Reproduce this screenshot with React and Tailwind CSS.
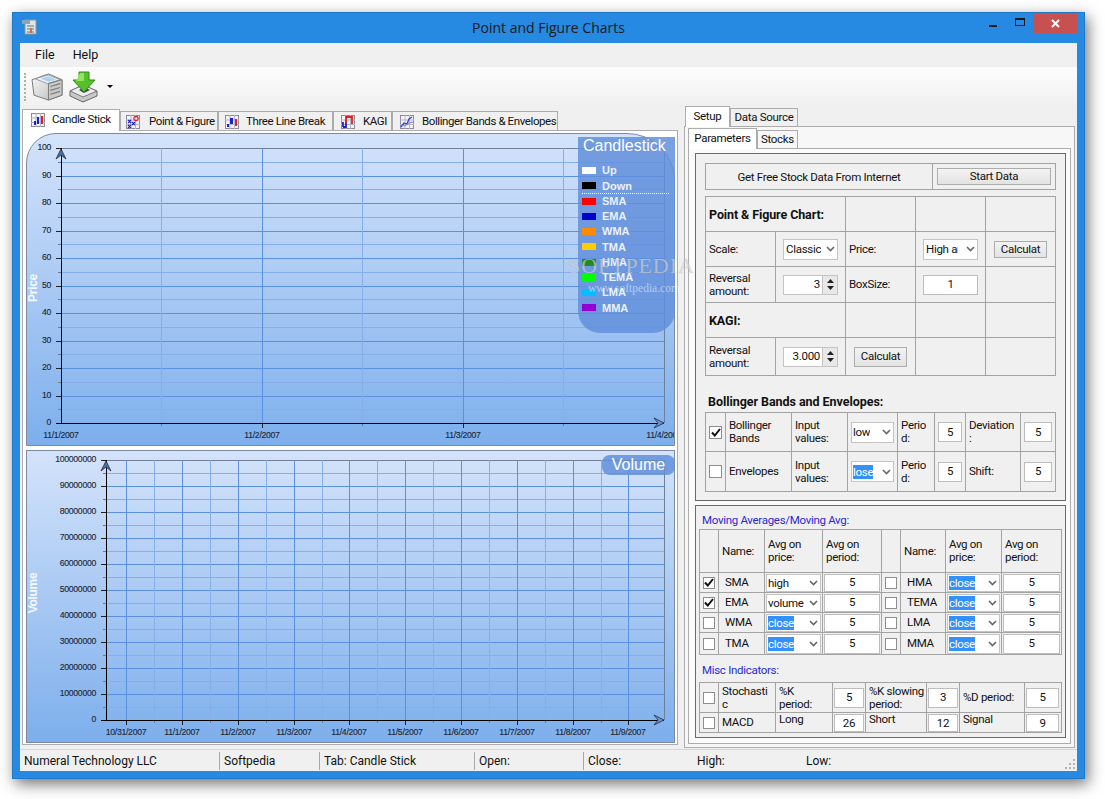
import React from "react";

const Chevron = () => (
  <svg width="9" height="6" viewBox="0 0 9 6" className="shrink-0">
    <path d="M1 1 L4.5 4.5 L8 1" fill="none" stroke="#666" strokeWidth="1.6" />
  </svg>
);

// combo box, text is clipped like the real winforms control
const Combo = ({ text, selected, className = "" }) => (
  <div className={`flex items-center justify-between bg-white border border-[#c4c4c4] pl-[1px] pr-[2px] ${className}`}>
    <span className={`overflow-hidden whitespace-nowrap leading-[14px] ${selected ? "bg-[#3390ff] text-white" : ""}`}>{text}</span>
    <Chevron />
  </div>
);

const Box = ({ value, className = "" }) => (
  <div className={`flex items-center justify-center bg-white border border-[#bdbdbd] ${className}`}>{value}</div>
);

const Spin = ({ value }) => (
  <div className="flex items-center w-[55px] h-[20px] bg-white border border-[#c4c4c4]">
    <span className="flex-1 text-right pr-[2px]">{value}</span>
    <div className="flex flex-col w-[15px] h-full bg-[#e8e8e8] border-l border-[#c4c4c4] items-center justify-around py-[2px]">
      <svg width="7" height="4" viewBox="0 0 7 4"><path d="M3.5 0 L7 4 L0 4 Z" fill="#222" /></svg>
      <svg width="7" height="4" viewBox="0 0 7 4"><path d="M0 0 L7 0 L3.5 4 Z" fill="#222" /></svg>
    </div>
  </div>
);

const Check = ({ checked, className = "w-[13px] h-[13px]" }) => (
  <div className={`flex items-center justify-center bg-white border border-[#8e8e8e] shrink-0 ${className}`}>
    {checked && (
      <svg width="10" height="9" viewBox="0 0 10 9">
        <path d="M1 4.5 L3.8 7.5 L9 1" fill="none" stroke="#111" strokeWidth="2" />
      </svg>
    )}
  </div>
);

const Btn = ({ children, className = "" }) => (
  <div className={`flex items-center justify-center border border-[#adadad] bg-gradient-to-b from-[#f3f3f3] to-[#e3e3e3] ${className}`}>
    {children}
  </div>
);

const Cell = ({ children, className = "" }) => (
  <div className={`bg-[#f0f0f0] flex items-center leading-[13px] min-w-0 ${className}`}>{children}</div>
);

// little 13px tab pictures
const TabIcon = ({ children }) => (
  <svg width="14" height="14" viewBox="0 0 14 14" className="shrink-0">
    <rect x="0.5" y="0.5" width="13" height="13" fill="#f4f4f8" stroke="#8a8a9a" />
    <path d="M0 5 H14 M0 9.5 H14 M5 0 V14 M9.5 0 V14" stroke="#b4b4c4" strokeWidth="1" />
    {children}
  </svg>
);

const tabs = [
  {
    label: "Candle Stick",
    w: "w-[98px] pl-[8px] gap-[7px]",
    icon: (
      <TabIcon>
        <rect x="3" y="8" width="2" height="4" fill="#2222cc" />
        <rect x="6" y="4" width="2" height="7" fill="#2222cc" />
        <rect x="10" y="3" width="2" height="8" fill="#e02020" />
      </TabIcon>
    ),
  },
  {
    label: "Point & Figure",
    w: "w-[98px] pl-[5px] gap-[9px]",
    icon: (
      <TabIcon>
        <path d="M2 5 L5 8 M5 5 L2 8 M2 10 L5 13 M5 10 L2 13 M6 7 L9 10 M9 7 L6 10" stroke="#2222cc" strokeWidth="1.2" />
        <circle cx="10" cy="3.5" r="2.2" fill="none" stroke="#e02020" strokeWidth="1.2" />
      </TabIcon>
    ),
  },
  {
    label: "Three Line Break",
    w: "w-[115px] pl-[6px] gap-[7px]",
    icon: (
      <TabIcon>
        <rect x="2" y="9" width="2" height="3" fill="#2222cc" />
        <rect x="5" y="3" width="3" height="6" fill="#2222cc" />
        <rect x="10" y="4" width="2" height="7" fill="#e02020" />
      </TabIcon>
    ),
  },
  {
    label: "KAGI",
    w: "w-[59px] pl-[7px] gap-[8px]",
    icon: (
      <TabIcon>
        <path d="M2 12 H5 V5" fill="none" stroke="#2222cc" strokeWidth="1.8" />
        <path d="M5 8 V2 H11 V9" fill="none" stroke="#e02020" strokeWidth="1.8" />
        <path d="M2 7 V12" stroke="#2222cc" strokeWidth="1.8" />
      </TabIcon>
    ),
  },
  {
    label: "Bollinger Bands & Envelopes",
    w: "w-[166px] pl-[7px] gap-[8px]",
    icon: (
      <TabIcon>
        <path d="M1 12 L4 8 L7 9 L9 4 L12 2" fill="none" stroke="#3a3ae0" strokeWidth="1.3" />
        <path d="M1 10 L5 11 L9 8 L13 7" fill="none" stroke="#7a7af0" strokeWidth="1" />
      </TabIcon>
    ),
  },
];

const legend = [
  ["Up", "bg-white"],
  ["Down", "bg-black"],
  ["SMA", "bg-[#ff0000]"],
  ["EMA", "bg-[#0000cc]"],
  ["WMA", "bg-[#ff8c00]"],
  ["TMA", "bg-[#ffcc00]"],
  ["HMA", "bg-[#228b22]"],
  ["TEMA", "bg-[#00ff00]"],
  ["LMA", "bg-[#00bfff]"],
  ["MMA", "bg-[#9400d3]"],
];

const MAJOR = "#5b8fe0";
const MINOR = "#86aee8";
const labelProps = { fontFamily: "'Liberation Sans', sans-serif", fontSize: 8.7, fill: "#1c2635", stroke: "#1c2635", strokeWidth: 0.12 };

// axes and grid, drawn in page coordinates through the viewBox
const Plot = ({ box, left, top, bottom, right = 664, yLabels, labelRight, xMajor, xMinor, xLabels, title }) => {
  const step = (bottom - top) / (yLabels.length - 1);
  return (
    <svg width={box[2]} height={box[3]} viewBox={box.join(" ")} className="block" shapeRendering="crispEdges">
      {yLabels.map((v, i) => {
        const y = Math.round(top + step * i);
        const m = Math.round(top + step * (i + 0.5));
        return (
          <g key={v}>
            {i > 0 && i < yLabels.length - 1 && <line x1={left} x2={right} y1={y} y2={y} stroke={MAJOR} />}
            {i < yLabels.length - 1 && <line x1={left} x2={right} y1={m} y2={m} stroke={MINOR} />}
            {i < yLabels.length - 1 && <line x1={left - 3} x2={left} y1={m} y2={m} stroke="#6a7a94" />}
            <line x1={left - 5} x2={left} y1={y} y2={y} stroke="#222" />
            <text x={labelRight} y={y + 2} textAnchor="end" {...labelProps} shapeRendering="auto">{v}</text>
          </g>
        );
      })}
      <line x1={left} x2={right} y1={top} y2={top} stroke="#6f7f98" />
      {xMinor.map((x) => (
        <g key={x}>
          <line x1={x} x2={x} y1={top} y2={bottom} stroke={MINOR} />
          <line x1={x} x2={x} y1={bottom} y2={bottom + 3} stroke="#6a7a94" />
        </g>
      ))}
      {xMajor.map((x) => (
        <g key={x}>
          <line x1={x} x2={x} y1={top} y2={bottom} stroke={MAJOR} />
          <line x1={x} x2={x} y1={bottom} y2={bottom + 5} stroke="#222" />
        </g>
      ))}
      {xLabels.map(([x, t]) => (
        <text key={t} x={x} y={bottom + 15} textAnchor="middle" {...labelProps} shapeRendering="auto">{t}</text>
      ))}
      <line x1={right} x2={right} y1={top} y2={bottom} stroke="#6f7f98" />
      <line x1={left} x2={left} y1={top} y2={bottom} stroke="#000" />
      <line x1={left - 5} x2={right} y1={bottom} y2={bottom} stroke="#000" />
      <g shapeRendering="auto">
        <path d={`M${left} ${top + 1} L${left - 5} ${top + 11} L${left} ${top + 7} L${left + 5} ${top + 11} Z`} fill="#4a6ea8" stroke="#1d2a44" strokeWidth="0.8" />
        <path d={`M${right} ${bottom} L${right - 10} ${bottom - 5} L${right - 6} ${bottom} L${right - 10} ${bottom + 5} Z`} fill="#6f93cf" stroke="#1d2a44" strokeWidth="0.8" />
        <text
          transform={`translate(37 ${title.y}) rotate(-90)`}
          textAnchor="middle"
          fontFamily="'Liberation Sans', sans-serif"
          fontWeight="700"
          fontSize="12"
          fill="#ffffff"
          fillOpacity="0.9"
        >
          {title.text}
        </text>
      </g>
    </svg>
  );
};

const priceTicks = ["100", "90", "80", "70", "60", "50", "40", "30", "20", "10", "0"];
const volumeTicks = ["100000000", "90000000", "80000000", "70000000", "60000000", "50000000", "40000000", "30000000", "20000000", "10000000", "0"];
const volumeX = [126, 182, 238, 294, 349, 405, 461, 517, 573, 628];
const volumeDates = ["10/31/2007", "11/1/2007", "11/2/2007", "11/3/2007", "11/4/2007", "11/5/2007", "11/6/2007", "11/7/2007", "11/8/2007", "11/9/2007"];

const maRows = [
  ["SMA", true, "high", false, "HMA"],
  ["EMA", true, "volume", false, "TEMA"],
  ["WMA", false, "close", true, "LMA"],
  ["TMA", false, "close", true, "MMA"],
];

const Printer = () => (
  <svg width="33" height="29" viewBox="0 0 34 30">
    <defs>
      <linearGradient id="prn" x1="0" y1="0" x2="1" y2="1">
        <stop offset="0" stopColor="#fafafa" />
        <stop offset="1" stopColor="#b8b8b8" />
      </linearGradient>
    </defs>
    <path d="M1 8 L18 2 L32 8 L32 24 L18 29 L3 24 Z" fill="url(#prn)" stroke="#777" />
    <path d="M4 7 L18 3 L30 8 L17 12 Z" fill="#eef2f6" stroke="#999" />
    <path d="M10 7 L18 4.5 L26 8 L18 10 Z" fill="#a9d3f0" />
    <path d="M18 12 L32 8 L32 24 L18 29 Z" fill="#c9c9c9" stroke="#777" />
    <path d="M20 15 L30 12 M20 19 L30 16 M20 23 L30 20" stroke="#7b7b7b" strokeWidth="1.2" />
  </svg>
);

const Install = () => (
  <svg width="30" height="32" viewBox="0 0 30 32">
    <path d="M1 20 L14 14 L28 20 L28 25 L14 31 L1 25 Z" fill="#c8c8c8" stroke="#666" />
    <path d="M1 20 L14 14 L28 20 L14 26 Z" fill="#ececec" stroke="#777" />
    <path d="M10 19 L15 16 L21 19 L15 22 Z" fill="#444" />
    <path d="M10 1 H20 V9 H26 L15 21 L4 9 H10 Z" fill="#56c02c" stroke="#2e8a1a" />
    <path d="M11 2 H15 V10 H7 Z" fill="#92e35e" />
  </svg>
);

export default function App() {
  return (
    <div className="w-[1105px] h-[799px] bg-white pt-[12px] pl-[12px] text-[11.5px] tracking-[-0.3px] text-[#111] font-['Roboto',sans-serif]">
      <div className="w-[1073px] h-[767px] flex flex-col bg-[#2689e2] px-[8px] pb-[8px] shadow-[inset_0_0_0_1px_#1f78c8,3px_5px_14px_rgba(0,0,0,0.55)]">
        {/* title bar */}
        <div className="relative h-[31px] flex items-center justify-center shrink-0 font-['Open_Sans',sans-serif] text-[14px] tracking-normal text-[#1a1a1a] -mx-[8px]">
          <svg width="15" height="16" viewBox="0 0 15 16" className="absolute left-[10px] top-[7px]">
            <rect x="3" y="1" width="11" height="14" fill="#dfe5e8" stroke="#8c96a0" />
            <rect x="0" y="1" width="8" height="4" fill="#8aa4bc" />
            <path d="M5 7 H12 M5 10 H12 M5 13 H12" stroke="#7fa68a" strokeWidth="1.4" />
            <rect x="8" y="9" width="2" height="5" fill="#d66" />
          </svg>
          Point and Figure Charts
          <div className="absolute right-[8px] top-[1px] flex items-start">
            <div className="w-[8px] h-[2px] bg-[#1a1a1a] mt-[12px]" />
            <div className="w-[10px] h-[8px] ml-[18px] mt-[5px] border border-[#1a1a1a] border-t-2" />
            <div className="w-[44px] h-[20px] ml-[8px] bg-[#c75050] flex items-center justify-center">
              <svg width="9" height="9" viewBox="0 0 9 9">
                <path d="M1 1 L8 8 M8 1 L1 8" stroke="#fff" strokeWidth="2" />
              </svg>
            </div>
          </div>
        </div>

        <div className="flex-1 flex flex-col bg-[#f0f0f0] min-h-0">
          {/* menu */}
          <div className="h-[24px] shrink-0 flex items-center pl-[15px] gap-[18px] text-[12.5px] tracking-normal">
            <span>File</span>
            <span>Help</span>
          </div>
          {/* toolbar */}
          <div className="h-[39px] shrink-0 flex items-center pl-[4px] bg-gradient-to-b from-[#fdfdfd] to-[#f0f0f0]">
            <div className="h-[28px] w-[2px] border-l-2 border-dotted border-[#b0b0b0]" />
            <div className="ml-[5px]"><Printer /></div>
            <div className="ml-[5px]"><Install /></div>
            <div className="ml-[8px] w-0 h-0 border-x-[3px] border-x-transparent border-t-[3px] border-t-black" />
          </div>

          <div className="h-[642px] shrink-0 flex">
            {/* left side: chart tabs */}
            <div className="w-[656px] ml-[2px] pt-[3px] shrink-0">
              <div className="h-[21px] flex items-end relative z-10 tracking-[-0.4px]">
                {tabs.map((t, i) => (
                  <div
                    key={t.label}
                    className={`${t.w} flex items-center border border-b-0 border-[#acacac] whitespace-nowrap shrink-0 ${
                      i === 0 ? "h-[22px] -mb-px bg-white pb-[2px]" : "h-[19px] bg-[#f0f0f0] pt-px"
                    }`}
                  >
                    {t.icon}
                    <span>{t.label}</span>
                  </div>
                ))}
              </div>
              <div className="h-[615px] border border-[#acacac] bg-white pt-[2px] pl-[3px] pr-[2px] flex flex-col gap-[4px]">
                <div className="relative h-[313px] shrink-0">
                  <div className="h-full overflow-hidden rounded-tl-[30px] rounded-tr-[48px] border border-[#7b8aa2] bg-gradient-to-b from-[#d4e3fa] to-[#7dafec]">
                    <Plot
                      box={[27, 134, 647, 311]}
                      left={61}
                      top={148}
                      bottom={423}
                      yLabels={priceTicks}
                      labelRight={51}
                      xMajor={[262, 463]}
                      xMinor={[161, 362, 563]}
                      xLabels={[[61, "11/1/2007"], [262, "11/2/2007"], [463, "11/3/2007"], [664, "11/4/2007"]]}
                      title={{ text: "Price", y: 288 }}
                    />
                  </div>
                  {/* legend floats over the plot */}
                  <div className="absolute left-[552px] top-[4px] w-[97px] h-[196px] rounded-b-[22px] bg-[#628fdc]/85 font-['Liberation_Sans',sans-serif] tracking-normal">
                    <div className="text-[16px] leading-[18px] text-white pl-[5px]">Candlestick</div>
                    <div className="mt-[8px] flex flex-col">
                      {legend.map(([name, color], i) => (
                        <div key={name} className="relative h-[15.25px] flex items-center pl-[4px] gap-[6px] text-[11px] font-bold text-[#eaf1fc]">
                          <span className={`w-[14px] h-[7px] ${color}`} />
                          {name}
                          {i === 1 && <span className="absolute left-[4px] right-[6px] bottom-0 border-b border-dotted border-white" />}
                        </div>
                      ))}
                    </div>
                  </div>
                  {/* watermark */}
                  <div className="absolute left-[542px] top-[122px] z-20 font-['Liberation_Serif',serif] text-[22px] leading-[22px] tracking-[0.9px] text-white/45 [text-shadow:0_0_1px_rgba(110,110,110,0.45)] whitespace-nowrap pointer-events-none">
                    SOFTPEDIA
                  </div>
                  <div className="absolute left-[562px] top-[148px] z-20 font-['Liberation_Serif',serif] text-[11.5px] leading-[14px] tracking-normal text-white/50 whitespace-nowrap pointer-events-none">
                    www.softpedia.com
                  </div>
                </div>
                <div className="relative h-[293px] shrink-0">
                  <div className="h-full overflow-hidden border border-[#7b8aa2] bg-gradient-to-b from-[#d4e3fa] to-[#7dafec]">
                    <Plot
                      box={[27, 451, 647, 291]}
                      left={106}
                      top={460}
                      bottom={720}
                      yLabels={volumeTicks}
                      labelRight={96}
                      xMajor={volumeX}
                      xMinor={[154, 210, 266, 322, 377, 433, 489, 545, 601]}
                      xLabels={volumeX.map((x, i) => [x, volumeDates[i]])}
                      title={{ text: "Volume", y: 593 }}
                    />
                  </div>
                  <div className="absolute left-[576px] top-[5px] w-[73px] h-[20px] rounded-[8px] bg-[#628fdc]/85 flex items-center justify-center font-['Liberation_Sans',sans-serif] tracking-normal text-[16px] text-white">
                    Volume
                  </div>
                </div>
              </div>
            </div>

            {/* right side: setup */}
            <div className="w-[391px] ml-[6px] shrink-0">
              <div className="h-[20px] flex items-end pl-[1px] relative z-10">
                <div className="w-[45px] h-[21px] -mb-px flex items-center justify-center bg-white border border-b-0 border-[#acacac]">Setup</div>
                <div className="w-[68px] h-[18px] flex items-center justify-center border border-b-0 border-[#acacac] whitespace-nowrap">Data Source</div>
              </div>
              <div className="h-[622px] border border-[#acacac] bg-[#f7f7f7] px-[3px] pt-[1px]">
                <div className="h-[20px] flex items-end relative z-10">
                  <div className="w-[69px] h-[21px] -mb-px flex items-center justify-center bg-white border border-b-0 border-[#acacac]">Parameters</div>
                  <div className="w-[41px] h-[18px] flex items-center justify-center border border-b-0 border-[#acacac]">Stocks</div>
                </div>
                <div className="h-[596px] border border-[#acacac] bg-[#fbfbfb] pt-[4px] pl-[6px] pr-[4px]">
                  {/* first group */}
                  <div className="h-[348px] border border-[#6a6a6a] bg-[#f0f0f0] px-[9px] pt-[9px]">
                    <div className="grid grid-cols-[226px_122px] grid-rows-[25px] gap-px bg-[#a3a3a3] border border-[#a3a3a3]">
                      <Cell className="justify-center pt-px">Get Free Stock Data From Internet</Cell>
                      <Cell className="justify-center">
                        <Btn className="w-[114px] h-[17px]">Start Data</Btn>
                      </Cell>
                    </div>
                    <div className="mt-[6px] grid grid-cols-[repeat(5,69px)] grid-rows-[34px_34px_35px_34px_37px] gap-px bg-[#a3a3a3] border border-[#a3a3a3]">
                      <Cell className="col-span-2 pl-[3px] font-bold text-[12.5px] tracking-[-0.1px]">Point &amp; Figure Chart:</Cell>
                      <Cell />
                      <Cell />
                      <Cell />

                      <Cell className="pl-[3px]">Scale:</Cell>
                      <Cell className="pl-[7px]"><Combo text="Classic" className="w-[55px] h-[21px] pl-[2px]" /></Cell>
                      <Cell className="pl-[3px]">Price:</Cell>
                      <Cell className="pl-[7px]">
                        <Combo text={<span className="block w-[32px] overflow-hidden">High and</span>} className="w-[55px] h-[21px] pl-[2px]" />
                      </Cell>
                      <Cell className="pl-[8px]"><Btn className="w-[53px] h-[17px]">Calculat</Btn></Cell>

                      <Cell className="pl-[3px]"><span>Reversal<br />amount:</span></Cell>
                      <Cell className="pl-[7px]"><Spin value="3" /></Cell>
                      <Cell className="pl-[3px]">BoxSize:</Cell>
                      <Cell className="pl-[7px]"><Box value="1" className="w-[55px] h-[20px]" /></Cell>
                      <Cell />

                      <Cell className="col-span-2 pl-[3px] font-bold text-[12.5px] tracking-[-0.1px]">KAGI:</Cell>
                      <Cell />
                      <Cell />
                      <Cell />

                      <Cell className="pl-[3px]"><span>Reversal<br />amount:</span></Cell>
                      <Cell className="pl-[7px]"><Spin value="3.000" /></Cell>
                      <Cell className="pl-[8px]"><Btn className="w-[53px] h-[20px]">Calculat</Btn></Cell>
                      <Cell />
                      <Cell />
                    </div>
                    <div className="h-[36px] flex items-end font-bold text-[12.5px] tracking-[-0.05px] leading-[20px] pl-[3px]">Bollinger Bands and Envelopes:</div>
                    <div className="grid grid-cols-[19px_65px_55px_49px_36px_30px_54px_34px] grid-rows-[38px_39px] gap-px bg-[#a3a3a3] border border-[#a3a3a3]">
                      <Cell className="justify-center"><Check checked /></Cell>
                      <Cell className="pl-[3px]"><span>Bollinger<br />Bands</span></Cell>
                      <Cell className="pl-[3px]"><span>Input<br />values:</span></Cell>
                      <Cell className="pl-[3px]"><Combo text="low" className="w-[43px] h-[21px]" /></Cell>
                      <Cell className="pl-[3px]"><span>Perio<br />d:</span></Cell>
                      <Cell className="pl-[3px]"><Box value="5" className="w-[24px] h-[20px]" /></Cell>
                      <Cell className="pl-[3px]"><span>Deviation<br />:</span></Cell>
                      <Cell className="pl-[3px]"><Box value="5" className="w-[28px] h-[20px]" /></Cell>

                      <Cell className="justify-center"><Check /></Cell>
                      <Cell className="pl-[3px]">Envelopes</Cell>
                      <Cell className="pl-[3px]"><span>Input<br />values:</span></Cell>
                      <Cell className="pl-[3px]"><Combo text="lose" selected className="w-[43px] h-[21px]" /></Cell>
                      <Cell className="pl-[3px]"><span>Perio<br />d:</span></Cell>
                      <Cell className="pl-[3px]"><Box value="5" className="w-[24px] h-[20px]" /></Cell>
                      <Cell className="pl-[3px]">Shift:</Cell>
                      <Cell className="pl-[3px]"><Box value="5" className="w-[28px] h-[20px]" /></Cell>
                    </div>
                  </div>

                  {/* second group */}
                  <div className="mt-[4px] h-[233px] border border-[#6a6a6a] bg-[#f0f0f0] px-[3px]">
                    <div className="h-[23px] pt-[6px] pl-[3px] leading-[16px] text-[#2a2ad6]">Moving Averages/Moving Avg:</div>
                    <div className="grid grid-cols-[18px_45px_57px_58px_18px_44px_55px_59px] grid-rows-[42px_19px_19px_19px_21px] gap-px bg-[#a3a3a3] border border-[#a3a3a3]">
                      <Cell />
                      <Cell className="pl-[3px]">Name:</Cell>
                      <Cell className="pl-[3px]"><span>Avg on<br />price:</span></Cell>
                      <Cell className="pl-[3px]"><span>Avg on<br />period:</span></Cell>
                      <Cell />
                      <Cell className="pl-[3px]">Name:</Cell>
                      <Cell className="pl-[3px]"><span>Avg on<br />price:</span></Cell>
                      <Cell className="pl-[3px]"><span>Avg on<br />period:</span></Cell>
                      {maRows.map(([left, on, price, sel, right], i) => {
                        const h = i === 3 ? "h-[20px]" : "h-[18px]";
                        return (
                          <React.Fragment key={left}>
                            <Cell className="pl-[3px]"><Check checked={on} className="w-[12px] h-[12px]" /></Cell>
                            <Cell className="pl-[6px]">{left}</Cell>
                            <Cell className="pl-px"><Combo text={price} selected={sel} className={`w-[55px] ${h}`} /></Cell>
                            <Cell className="pl-px"><Box value="5" className={`w-[56px] ${h}`} /></Cell>
                            <Cell className="pl-[3px]"><Check className="w-[12px] h-[12px]" /></Cell>
                            <Cell className="pl-[6px]">{right}</Cell>
                            <Cell className="pl-px"><Combo text="close" selected className={`w-[53px] ${h}`} /></Cell>
                            <Cell className="pl-px"><Box value="5" className={`w-[57px] ${h}`} /></Cell>
                          </React.Fragment>
                        );
                      })}
                    </div>
                    <div className="h-[27px] flex items-center pt-[4px] pl-[3px] text-[#2a2ad6]">Misc Indicators:</div>
                    <div className="grid grid-cols-[18px_56px_56px_32px_60px_32px_64px_36px] grid-rows-[29px_19px] gap-px bg-[#a3a3a3] border border-[#a3a3a3]">
                      <Cell className="pl-[3px]"><Check className="w-[12px] h-[12px]" /></Cell>
                      <Cell className="pl-[3px]"><span>Stochasti<br />c</span></Cell>
                      <Cell className="pl-[3px]"><span>%K<br />period:</span></Cell>
                      <Cell className="pl-[1px]"><Box value="5" className="w-[30px] h-[20px]" /></Cell>
                      <Cell className="pl-[3px] whitespace-nowrap"><span>%K slowing<br />period:</span></Cell>
                      <Cell className="pl-[1px]"><Box value="3" className="w-[30px] h-[20px]" /></Cell>
                      <Cell className="pl-[3px]">%D period:</Cell>
                      <Cell className="pl-[1px]"><Box value="5" className="w-[33px] h-[20px]" /></Cell>

                      <Cell className="pl-[3px]"><Check className="w-[12px] h-[12px]" /></Cell>
                      <Cell className="pl-[3px]">MACD</Cell>
                      <Cell className="pl-[3px] !items-start">Long</Cell>
                      <Cell className="pl-[1px] !items-end"><Box value="26" className="w-[30px] h-[18px]" /></Cell>
                      <Cell className="pl-[3px] !items-start">Short</Cell>
                      <Cell className="pl-[1px] !items-end"><Box value="12" className="w-[30px] h-[18px]" /></Cell>
                      <Cell className="pl-[3px] !items-start">Signal</Cell>
                      <Cell className="pl-[1px] !items-end"><Box value="9" className="w-[33px] h-[18px]" /></Cell>
                    </div>
                  </div>
                </div>
              </div>
            </div>
          </div>

          {/* status bar */}
          <div className="flex-1 border-t border-[#d7d7d7] mt-[1px] pt-[1px] flex items-center relative text-[12px] tracking-normal">
            <div className="w-[200px] h-[18px] flex items-center pl-[4px] border-r border-[#a8a8a8]">Numeral Technology LLC</div>
            <div className="w-[100px] h-[18px] flex items-center pl-[4px] border-r border-[#a8a8a8]">Softpedia</div>
            <div className="w-[155px] h-[18px] flex items-center pl-[4px] border-r border-[#a8a8a8]">Tab: Candle Stick</div>
            <div className="w-[109px] h-[18px] flex items-center pl-[4px] border-r border-[#a8a8a8]">Open:</div>
            <div className="w-[113px] h-[18px] flex items-center pl-[4px]">Close:</div>
            <div className="w-[109px] h-[18px] flex items-center">High:</div>
            <div className="h-[18px] flex items-center">Low:</div>
            <svg width="11" height="11" viewBox="0 0 11 11" className="absolute right-[1px] bottom-[1px]">
              {[[8, 0], [4, 4], [8, 4], [0, 8], [4, 8], [8, 8]].map(([x, y]) => (
                <rect key={`${x}-${y}`} x={x} y={y} width="2" height="2" fill="#b4b4b4" />
              ))}
            </svg>
          </div>
        </div>
      </div>
    </div>
  );
}
